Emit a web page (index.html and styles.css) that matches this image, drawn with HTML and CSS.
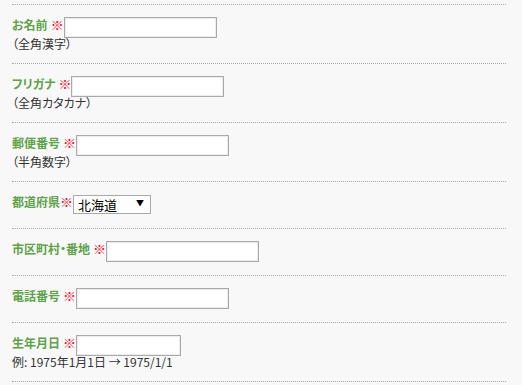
FILE: index.html
```html
<!DOCTYPE html>
<html lang="ja">
<head>
<meta charset="utf-8">
<link rel="stylesheet" href="styles.css">
</head>
<body>
<div class="form">
  <div class="row">
    <div class="line"><span class="label">お名前</span><span class="req sp">※</span><input class="text" type="text"></div>
    <div class="note">（全角漢字）</div>
  </div>
  <div class="row">
    <div class="line"><span class="label">フリガナ</span><span class="req sp">※</span><input class="text" type="text"></div>
    <div class="note">（全角カタカナ）</div>
  </div>
  <div class="row">
    <div class="line"><span class="label">郵便番号</span><span class="req sp">※</span><input class="text" type="text"></div>
    <div class="note">（半角数字）</div>
  </div>
  <div class="row">
    <div class="line"><span class="label">都道府県</span><span class="req">※</span><span class="select-wrap"><select class="select"><option>北海道</option></select></span></div>
  </div>
  <div class="row">
    <div class="line"><span class="label">市区町村・番地</span><span class="req sp">※</span><input class="text" type="text"></div>
  </div>
  <div class="row">
    <div class="line"><span class="label">電話番号</span><span class="req sp">※</span><input class="text" type="text"></div>
  </div>
  <div class="row">
    <div class="line"><span class="label">生年月日</span><span class="req sp">※</span><input class="text short" type="text"></div>
    <div class="note">例: 1975年1月1日 → 1975/1/1</div>
  </div>
  <div class="row end"></div>
</div>
</body>
</html>
```
FILE: styles.css
```css
html, body {
  margin: 0;
  padding: 0;
  background: #f8f8f8;
}
body {
  font-family: "Noto Sans CJK JP", "Noto Sans", sans-serif;
  font-size: 12px;
  color: #333;
}
.form {
  margin: 4px 16px 0 12px;
}
.row {
  border-top: 1px dotted #aaa;
  padding: 12px 0 13px;
}
.row.end {
  padding: 0;
}
.line {
  display: flex;
  align-items: flex-start;
  height: 21px;
}
.label {
  color: #5ea24a;
  font-weight: bold;
  line-height: 14px;
  margin-top: 1px;
  font-feature-settings: "palt";
}
.req {
  color: #f0101c;
  font-size: 13px;
  line-height: 14px;
  margin-top: 1px;
}
.req.sp {
  margin-left: 3px;
}
.text {
  box-sizing: border-box;
  width: 153px;
  height: 21px;
  margin: 0;
  padding: 1px 3px;
  border: 1px solid #a9a9a9;
  box-shadow: inset 0 0 0 1px #ececec;
  background: #fff;
  font: inherit;
}
.text.short {
  width: 105px;
}
.select-wrap {
  position: relative;
  display: block;
  margin-top: 1px;
}
.select {
  appearance: none;
  -webkit-appearance: none;
  box-sizing: border-box;
  width: 78px;
  height: 19px;
  margin: 0;
  padding: 0 0 0 4px;
  border: 1px solid #a9a9a9;
  border-radius: 0;
  background: #fff;
  color: #000;
  font-family: "Noto Sans CJK JP", sans-serif;
  font-size: 13px;
  line-height: 17px;
}
.select-wrap::after {
  content: "▼";
  position: absolute;
  right: 7px;
  top: 3px;
  font-size: 8px;
  line-height: 10px;
  color: #000;
  pointer-events: none;
}
.note {
  line-height: 12px;
  height: 12px;
  font-feature-settings: "palt";
}
```
